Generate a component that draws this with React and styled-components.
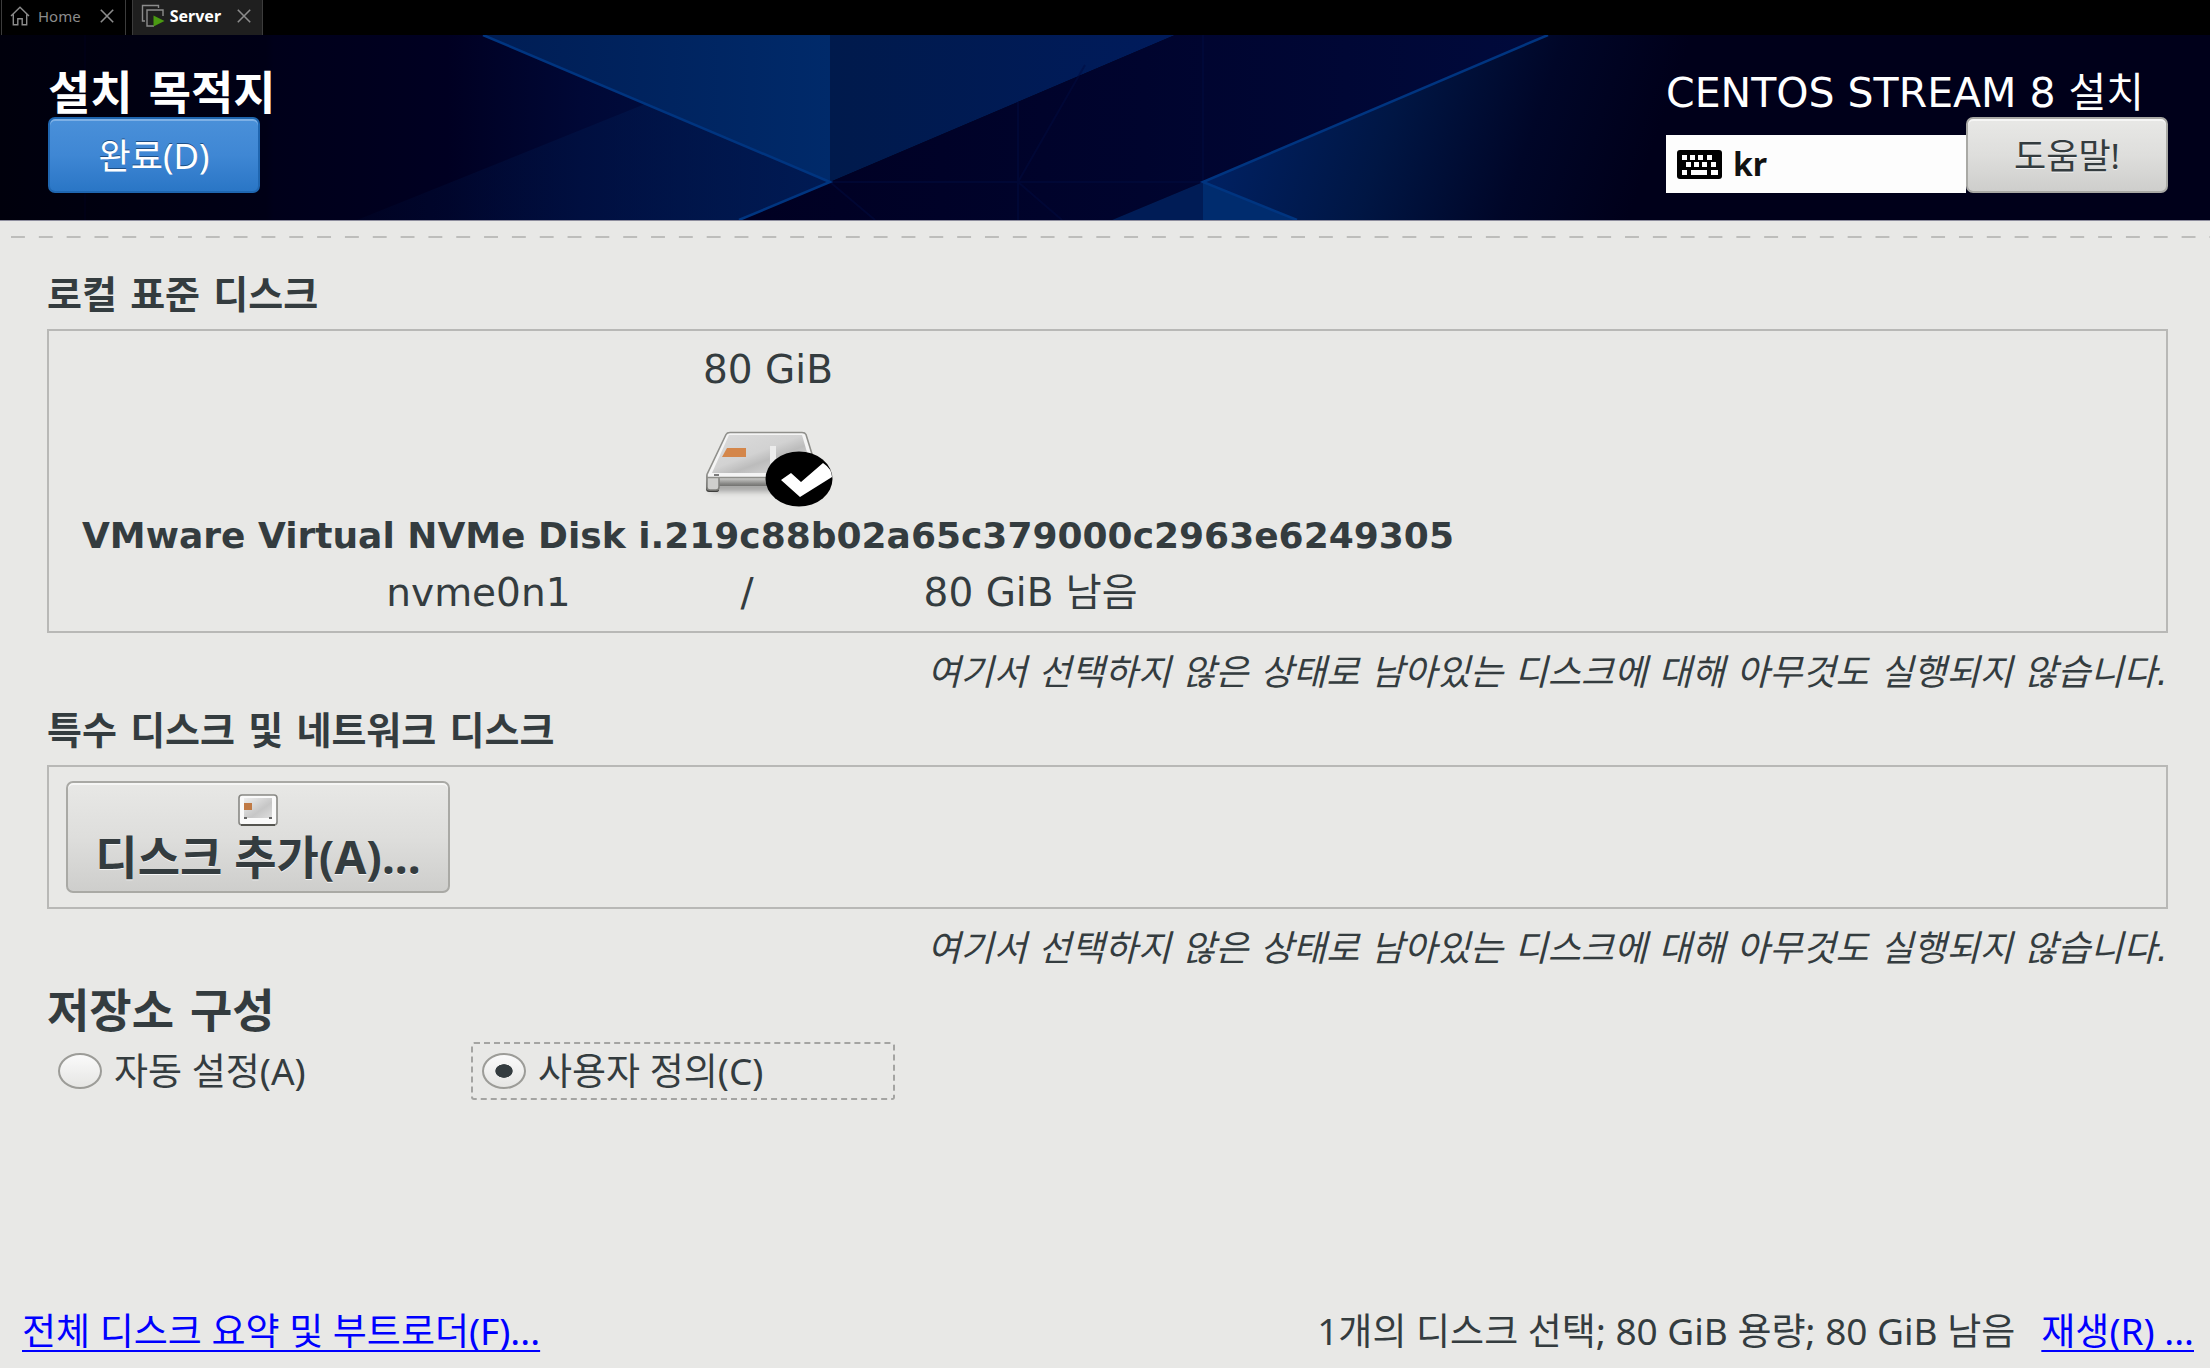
import React, { useState } from "react";
import styled, { createGlobalStyle, css } from "styled-components";

const GlobalStyle = createGlobalStyle`
  *, *::before, *::after { box-sizing: border-box; }
  body { margin: 0; background: #e8e8e6; }
  button, input { font: inherit; color: inherit; margin: 0; }
  h1, h2, p { margin: 0; }
`;

const ink = "#343c3f";
const line = "#b8b8b6";
const wideFont = `"DejaVu Sans", "Noto Sans CJK KR", sans-serif`;

const Page = styled.div`
  min-height: 100vh;
  display: flex;
  flex-direction: column;
  background: #e8e8e6;
  color: ${ink};
  font-family: "Noto Sans", "Noto Sans CJK KR", sans-serif;
  font-size: 37px;
  line-height: 48px;
`;

const TabBar = styled.nav`
  display: flex;
  gap: 6px;
  height: 35px;
  padding-left: 1px;
  background: #000;
  line-height: 20px;
`;

const Tab = styled.div`
  display: flex;
  align-items: center;
  padding: 0 11px 3px 8px;
  border: solid #3c3c3c;
  border-width: 0 1px;
  color: #8c8c8c;
  font-size: 15px;
  ${(p) =>
    p.$active &&
    css`
      background: #1f1f1f;
      color: #fff;
      font-size: 16px;
      font-weight: 700;
    `}
`;

const TabLabel = styled.button`
  display: flex;
  align-items: center;
  gap: ${(p) => p.$gap}px;
  padding: 0;
  border: 0;
  background: none;
`;

const TabClose = styled.button`
  display: flex;
  margin-left: ${(p) => p.$gap}px;
  padding: 0;
  border: 0;
  background: none;
  color: #8c8c8c;
`;

const Banner = styled.header`
  position: relative;
  isolation: isolate;
  display: flex;
  justify-content: space-between;
  height: 186px;
  padding: 30px 42px 0 48px;
  border-bottom: 1px solid #8e8e9e;
  background: #00001a;
  color: #fff;
`;

const BannerArt = styled.svg`
  position: absolute;
  inset: 0;
  z-index: -1;
  width: 100%;
  height: 100%;
`;

const BannerSide = styled.div`
  display: flex;
  flex-direction: column;
  align-items: flex-start;
`;

const Title = styled.h1`
  height: 52px;
  font-family: ${wideFont};
  font-size: 46px;
  font-weight: 700;
  line-height: 56px;
`;

const Product = styled.p`
  height: 52px;
  font-family: ${wideFont};
  font-size: 41px;
  line-height: 56px;
`;

const Button = styled.button`
  width: ${(p) => p.$width}px;
  height: 76px;
  padding: 2px 0 0;
  border: 2px solid #a9a9a5;
  border-radius: 7px;
  background: linear-gradient(#e8e8e6, #dededc 50%, #cececc);
  box-shadow: inset 0 2px 0 #f6f6f5;
  color: ${ink};
  font-size: 35px;
  text-shadow: 0 1px 0 #f4f4f4;
  ${(p) =>
    p.$primary &&
    css`
      border-color: #1f66b0;
      background: linear-gradient(#4a90d9, #3f87d4 50%, #2a76c6);
      box-shadow: inset 0 2px 0 #7db0e6;
      color: #fff;
      text-shadow: 0 -1px 0 #1d4f86;
    `}
`;

const Tools = styled.div`
  display: flex;
  align-items: flex-end;
`;

const Layout = styled.button`
  display: flex;
  align-items: center;
  gap: 11px;
  width: 300px;
  height: 58px;
  padding: 0 11px;
  border: 0;
  background: #fdfdfd;
  color: #111;
  font-size: 32px;
  font-weight: 700;
`;

const Dashes = styled.hr`
  width: calc(100% - 11px);
  height: 2px;
  margin: 15px 0 0 11px;
  border: 0;
  background: linear-gradient(90deg, #bdbdbb 50%, transparent 50%) 0 0 / 28px 2px;
  background-repeat: round no-repeat;
`;

const Content = styled.main`
  display: flex;
  flex-direction: column;
  padding: 33px 42px 0 47px;
`;

const Heading = styled.h2`
  margin-bottom: 10px;
  font-family: ${wideFont};
  font-size: 38px;
  font-weight: 700;
`;

const LargeHeading = styled(Heading)`
  margin-bottom: 3px;
  font-size: 46px;
  line-height: 56px;
`;

const Panel = styled.section`
  display: flex;
  border: 2px solid ${line};
  padding: ${(p) => p.$pad};
`;

const Note = styled.p`
  margin: 16px 0 10px;
  font-family: ${wideFont};
  font-size: 36px;
  font-style: italic;
  text-align: right;
`;

const Disk = styled.button`
  display: flex;
  flex-direction: column;
  align-items: center;
  padding: 0;
  border: 0;
  background: none;
  font-family: ${wideFont};
  font-size: 39px;
`;

const DiskName = styled.strong`
  font-size: 36px;
`;

const DiskFacts = styled.span`
  display: flex;
  justify-content: center;
  gap: 170px;
  padding: 9px 12px 0 0;
`;

const DriveArt = styled.svg`
  margin: 37px 0 5px;
`;

const AddDisk = styled(Button)`
  display: flex;
  flex-direction: column;
  align-items: center;
  gap: 6px;
  height: 112px;
  padding-top: 11px;
  font-size: 46px;
  font-weight: 700;
`;

const Choices = styled.div`
  display: flex;
`;

const Choice = styled.label`
  display: flex;
  align-items: center;
  gap: 12px;
  width: 424px;
  height: 58px;
  padding: 0 9px;
  border: 2px dashed transparent;

  &:has(input:checked) {
    border: 2px dashed #a4a4a2;
    border-radius: 3px;
  }
`;

const Radio = styled.input`
  appearance: none;
  width: 44px;
  height: 36px;
  border: 2px solid #9c9c98;
  border-radius: 50%;
  background: linear-gradient(#fafafa, #e6e6e4);

  &:checked {
    background: radial-gradient(ellipse 9px 7px, ${ink} 92%, transparent),
      linear-gradient(#fafafa, #e6e6e4);
  }
`;

const Footer = styled.footer`
  display: flex;
  justify-content: space-between;
  margin-top: auto;
  padding: 0 16px 13px 22px;
`;

const Summary = styled.div`
  display: flex;
  gap: 26px;
`;

const Link = styled.a`
  color: #0000ff;
  text-decoration: underline 2px;
  text-underline-offset: 5px;
  text-decoration-skip-ink: none;
`;

const HomeIcon = () => (
  <svg width="20" height="20" viewBox="0 0 20 20" fill="none" stroke="#8c8c8c" strokeWidth="1.4">
    <path d="M1 10 10 1.2 19 10M3.3 8.5v10.2h4.500v-6h4.4v6h4.500V8.5" />
  </svg>
);

const MachineIcon = () => (
  <svg width="24" height="24" viewBox="0 0 24 24" fill="none" stroke="#8c8c8c" strokeWidth="1.4">
    <path d="M4 17H1.5V1.5h16V4M13 22H6V6h16v6" />
    <path d="M12.500 11.500v11L23.500 17z" fill="#4a9a12" stroke="none" />
  </svg>
);

const CloseIcon = () => (
  <svg width="14" height="14" viewBox="0 0 14 14" stroke="currentColor" strokeWidth="1.6">
    <path d="M.8.8l12.400 12.400M13.200.8.8 13.200" />
  </svg>
);

const keys = [
  [5, 5, 5], [13, 5, 5], [21, 5, 5], [30, 5, 5],
  [9, 12, 5], [17, 12, 5], [25, 12, 5], [34, 12, 5],
  [5, 20, 5], [14, 20, 16], [34, 20, 7],
];

const KeyboardIcon = () => (
  <svg width="45" height="29" viewBox="0 0 45 29">
    <rect width="45" height="29" rx="3" fill="#000" />
    {keys.map(([x, y, w]) => (
      <rect key={`${x}-${y}`} x={x} y={y} width={w} height="5" fill="#fdfdfd" />
    ))}
  </svg>
);

const DriveIcon = ({ selected }) => (
  <DriveArt width="130" height="76" viewBox="0 0 130 76">
    <defs>
      <linearGradient id="top" x1="0" y1="0" x2="1" y2="1">
        <stop offset="0" stopColor="#dcdcdc" />
        <stop offset=".45" stopColor="#d2d2d2" />
        <stop offset=".6" stopColor="#bcbcbc" />
        <stop offset="1" stopColor="#e6e6e6" />
      </linearGradient>
      <linearGradient id="front" x1="0" y1="0" x2="0" y2="1">
        <stop offset="0" stopColor="#f2f2f0" />
        <stop offset=".5" stopColor="#8a8a88" />
        <stop offset="1" stopColor="#3a3a38" />
      </linearGradient>
      <filter id="soft" x="-20%" y="-100%" width="140%" height="300%">
        <feGaussianBlur stdDeviation="3" />
      </filter>
    </defs>
    <rect x="8" y="52" width="96" height="8" fill="#777" opacity=".7" filter="url(#soft)" />
    <path d="M3 44h112v11H16v4q0 2-3 2H6q-3 0-3-3z" fill="url(#front)" />
    <path d="M4 45h12v11q0 3-3 3H7q-3 0-3-3z" fill="#cfcfcd" stroke="#80807c" strokeWidth="1.500" />
    <path d="M23 3.500Q24 1.500 27 1.500h72q3 0 4 2l12 39v4H4v-3z" fill="#f4f4f4" stroke="#8f8f8b" strokeWidth="1.600" />
    <path d="M26 4h73l11 38H9z" fill="url(#top)" />
    <path d="M24 17h19v9H19z" fill="#d4864a" />
    <path d="M67 15h6v24h-6z" fill="#ececec" />
    <path d="M11 44h5" stroke="#555" strokeWidth="1.500" />
    {selected && (
      <>
        <ellipse cx="96" cy="48" rx="33.500" ry="27.500" fill="#000" />
        <path d="M78 49l10-7 10 9 22-19q9 6 9 14L97 66z" fill="#fff" />
      </>
    )}
  </DriveArt>
);

const SmallDriveIcon = () => (
  <svg width="40" height="32" viewBox="0 0 40 32">
    <defs>
      <linearGradient id="lid" x1="0" y1="0" x2="1" y2="1">
        <stop offset="0" stopColor="#eee" />
        <stop offset=".6" stopColor="#c6c6c6" />
        <stop offset="1" stopColor="#ddd" />
      </linearGradient>
    </defs>
    <rect x="1" y="1" width="38" height="30" rx="3" fill="#fafafa" stroke="#888884" strokeWidth="1.600" />
    <path d="M3 31h34" stroke="#555550" strokeWidth="2" />
    <path d="M6 4h28v20H6z" fill="url(#lid)" />
    <path d="M6 9h8v7H6z" fill="#c07a45" />
    <path d="M6 24h3M31 24h3" stroke="#666" strokeWidth="2" />
  </svg>
);

const BannerBackground = () => (
  <BannerArt viewBox="0 0 2210 185" preserveAspectRatio="none" aria-hidden="true">
    <defs>
      <linearGradient id="leftGlow">
        <stop offset="0" stopColor="#00000c" />
        <stop offset=".32" stopColor="#000016" />
        <stop offset=".33" stopColor="#00001a" />
        <stop offset=".54" stopColor="#000022" />
        <stop offset=".7" stopColor="#000836" />
        <stop offset="1" stopColor="#00144a" />
      </linearGradient>
      <linearGradient id="sweep">
        <stop offset="0" stopColor="#001a50" stopOpacity=".1" />
        <stop offset=".5" stopColor="#001a50" stopOpacity=".4" />
        <stop offset="1" stopColor="#001c56" stopOpacity=".8" />
      </linearGradient>
      <linearGradient id="facet">
        <stop offset="0" stopColor="#001d54" />
        <stop offset="1" stopColor="#002a6a" />
      </linearGradient>
      <linearGradient id="facetRight">
        <stop offset="0" stopColor="#001a4c" />
        <stop offset="1" stopColor="#001b5c" />
      </linearGradient>
      <linearGradient id="middle">
        <stop offset="0" stopColor="#000022" />
        <stop offset=".5" stopColor="#00042e" />
        <stop offset="1" stopColor="#000a3c" />
      </linearGradient>
      <linearGradient id="rightGlow" gradientUnits="userSpaceOnUse" x1="1240" y1="80" x2="1620" y2="210">
        <stop offset="0" stopColor="#002060" />
        <stop offset=".36" stopColor="#001644" />
        <stop offset=".7" stopColor="#000628" />
        <stop offset="1" stopColor="#00001a" />
      </linearGradient>
    </defs>
    <path d="M0 0H483L830 147 739 185H0z" fill="url(#leftGlow)" />
    <path d="M85 0v185" stroke="#00001c" />
    <path d="M645 69 357 185H739L830 147z" fill="url(#sweep)" />
    <path d="M483 0H830V147z" fill="url(#facet)" />
    <path d="M830 0H1175L830 147z" fill="url(#facetRight)" />
    <path d="M1175 0H1548L1203 147 1112 185H739L830 147z" fill="url(#middle)" />
    <path d="M1548 0H2210V185H1297L1203 147z" fill="url(#rightGlow)" />
    <path d="M1203 147 1112 185H1203z" fill="#001c56" />
    <path d="M1203 147V185H1297z" fill="#002c6e" />
    <path d="M830 147H1203M1018 67V185M1203 0V147M1018 147 1085 30M1018 147l44 38M830 147l45 38" fill="none" stroke="#000c40" strokeWidth="2" opacity=".5" />
    <path d="M483 0 830 147 739 185M1548 0 1203 147 1297 185" fill="none" stroke="#003580" strokeWidth="2.500" />
  </BannerArt>
);

export default function App() {
  const [selected, setSelected] = useState(true);
  return (
    <Page lang="ko">
      <GlobalStyle />
      <TabBar>
        <Tab>
          <TabLabel $gap={8}>
            <HomeIcon />
            Home
          </TabLabel>
          <TabClose $gap={19} aria-label="Close Home">
            <CloseIcon />
          </TabClose>
        </Tab>
        <Tab $active>
          <TabLabel $gap={5}>
            <MachineIcon />
            Server
          </TabLabel>
          <TabClose $gap={16} aria-label="Close Server">
            <CloseIcon />
          </TabClose>
        </Tab>
      </TabBar>

      <Banner>
        <BannerBackground />
        <BannerSide>
          <Title>설치 목적지</Title>
          <Button $primary $width={212}>완료(D)</Button>
        </BannerSide>
        <BannerSide>
          <Product>CENTOS STREAM 8 설치</Product>
          <Tools>
            <Layout>
              <KeyboardIcon />
              kr
            </Layout>
            <Button $width={202}>도움말!</Button>
          </Tools>
        </BannerSide>
      </Banner>
      <Dashes />

      <Content>
        <Heading>로컬 표준 디스크</Heading>
        <Panel $pad="15px 33px 14px">
          <Disk aria-pressed={selected} onClick={() => setSelected(!selected)}>
            <span>80 GiB</span>
            <DriveIcon selected={selected} />
            <DiskName>VMware Virtual NVMe Disk i.219c88b02a65c379000c2963e6249305</DiskName>
            <DiskFacts>
              <span>nvme0n1</span>
              <span>/</span>
              <span>80 GiB 남음</span>
            </DiskFacts>
          </Disk>
        </Panel>
        <Note>여기서 선택하지 않은 상태로 남아있는 디스크에 대해 아무것도 실행되지 않습니다.</Note>

        <Heading>특수 디스크 및 네트워크 디스크</Heading>
        <Panel $pad="14px 17px">
          <AddDisk $width={384}>
            <SmallDriveIcon />
            디스크 추가(A)...
          </AddDisk>
        </Panel>
        <Note>여기서 선택하지 않은 상태로 남아있는 디스크에 대해 아무것도 실행되지 않습니다.</Note>

        <LargeHeading>저장소 구성</LargeHeading>
        <Choices role="radiogroup" aria-label="저장소 구성">
          <Choice>
            <Radio type="radio" name="storage" />
            자동 설정(A)
          </Choice>
          <Choice>
            <Radio type="radio" name="storage" defaultChecked />
            사용자 정의(C)
          </Choice>
        </Choices>
      </Content>

      <Footer>
        <Link href="#summary">전체 디스크 요약 및 부트로더(F)...</Link>
        <Summary>
          <span>1개의 디스크 선택; 80 GiB 용량; 80 GiB 남음</span>
          <Link href="#refresh">재생(R) ...</Link>
        </Summary>
      </Footer>
    </Page>
  );
}
